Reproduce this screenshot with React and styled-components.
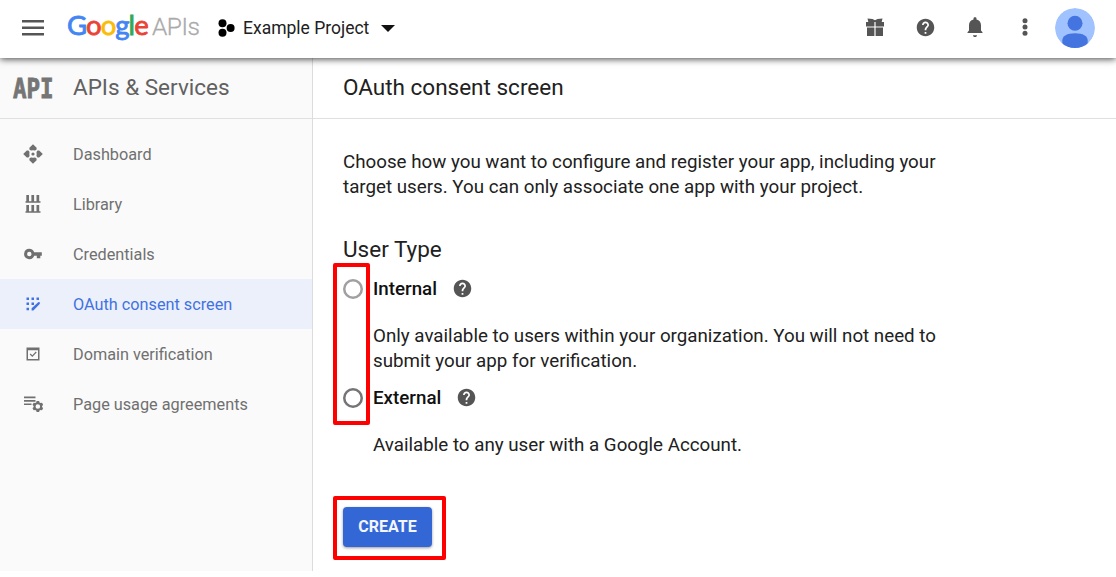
import React from "react";
import styled, { createGlobalStyle } from "styled-components";

const GlobalStyle = createGlobalStyle`
  * { box-sizing: border-box; }
  body { margin: 0; background: #fff; font-family: Roboto, "Liberation Sans", sans-serif; }
  h1, h2, p { margin: 0; font-weight: 400; }
  svg { display: block; }
`;

const Page = styled.div`
  display: flex;
  flex-direction: column;
  height: 577px;
  overflow: hidden;
`;

const TopBar = styled.header`
  display: flex;
  align-items: center;
  height: 58px;
  flex: none;
  padding: 0 16px 0 21px;
  background: #fff;
  box-shadow: 0 1px 7px rgba(0, 0, 0, 0.75);
  position: relative;
  z-index: 1;
`;

const IconButton = styled.button`
  display: grid;
  place-items: center;
  flex: none;
  width: ${(p) => p.$width || 50}px;
  height: 50px;
  margin-top: ${(p) => p.$top || "-4px"};
  padding: 0;
  border: 0;
  background: none;
  color: #555;
`;

const Brand = styled.div`
  display: flex;
  align-items: baseline;
  width: 151px;
  height: 42px;
  margin-left: 22px;
  white-space: nowrap;
`;

const GoogleWord = styled.span`
  font: 400 27.5px/34px Lato, sans-serif;
  letter-spacing: -0.95px;
  width: 85px;
`;

const Letter = styled.span`
  color: ${(p) => p.$color};
  -webkit-text-stroke: 0.8px ${(p) => p.$color};
`;

const ApisWord = styled.span`
  color: #aaa;
  font: 300 24.5px/34px Roboto, sans-serif;
  letter-spacing: -0.5px;
  -webkit-text-stroke: 0.3px #aaa;
`;

const ProjectPicker = styled.button`
  display: flex;
  align-items: center;
  gap: 8px;
  padding: 0;
  border: 0;
  background: none;
  color: #212121;
  font: 400 17.5px/24px Roboto, sans-serif;
  margin-top: -2px;
`;

const ProjectName = styled.span`
  width: 130px;
  text-align: left;
  white-space: nowrap;
`;

const Actions = styled.div`
  display: flex;
  align-items: center;
  margin-left: auto;
`;

const Body = styled.div`
  display: flex;
  height: 513px;
`;

const Sidebar = styled.aside`
  width: 313px;
  flex: none;
  background: #fafafa;
  border-right: 1px solid #dcdcdc;
`;

const SidebarTitle = styled.div`
  display: flex;
  align-items: center;
  height: 61px;
  padding: 0 0 2px 13px;
  border-bottom: 1px solid #e0e0e0;
  color: #616161;
  font-size: 22.5px;
`;

const ApiMark = styled.span`
  width: 60px;
  padding-top: 1px;
  color: #757575;
  font: 700 22.5px/22px "DejaVu Sans Mono", monospace;
  transform: scaleY(1.22);
  -webkit-text-stroke: 0.7px #757575;
`;

const Nav = styled.nav`
  padding-top: 10px;
`;

const NavItem = styled.a`
  display: flex;
  align-items: center;
  height: 50px;
  padding: 0 0 0 23px;
  gap: 30px;
  font-size: 16.25px;
  color: ${(p) => (p.$active ? "#4272e2" : "#707070")};
  background: ${(p) => (p.$active ? "#ebf0fa" : "transparent")};
`;

const Main = styled.main`
  flex: 1;
  color: #212121;
`;

const PageTitle = styled.h1`
  height: 61px;
  padding-left: 30px;
  border-bottom: 1px solid #e0e0e0;
  font-size: 22.5px;
  line-height: 58px;
`;

const Content = styled.div`
  padding: 31px 0 0 30px;
`;

const Copy = styled.p`
  font-size: 18.75px;
  line-height: 25px;
  white-space: nowrap;
`;

const SectionTitle = styled.h2`
  margin-top: 35px;
  font-size: 22.5px;
  line-height: 28px;
`;

const Options = styled.div`
  position: relative;
  padding-top: 11px;
`;

const Option = styled.section`
  margin-bottom: 9px;
`;

const OptionLabel = styled.label`
  display: flex;
  align-items: center;
  height: 30px;
  font-size: 18.75px;
  font-weight: 500;
  color: #111;
`;

const Radio = styled.span`
  width: 20px;
  height: 20px;
  margin-right: 10px;
  border-radius: 50%;
  box-shadow: inset 0 0 0 2.5px ${(p) => (p.$muted ? "#a0a0a0" : "#757575")};
`;

const HelpSlot = styled.span`
  margin: -1px 0 0 15px;
  color: #555;
`;

const OptionCopy = styled(Copy)`
  margin: 20px 0 0 30px;
`;

const Highlight = styled.span`
  position: absolute;
  pointer-events: none;
  inset: ${(p) => p.$inset};
  width: ${(p) => p.$width || "auto"};
  border: 4px solid #f00;
  border-radius: 2px;
`;

const CreateArea = styled.div`
  position: relative;
  width: 89px;
  margin-top: 49px;
`;

const CreateButton = styled.button`
  display: block;
  width: 89px;
  height: 40px;
  padding: 0;
  border: 0;
  border-radius: 4px;
  background: #3367d6;
  color: #f3f6ff;
  font: 700 16px/38px Roboto, sans-serif;
  box-shadow: 0 1px 3px rgba(0, 0, 0, 0.4);
`;

const Icon = ({ size = 20, box = "0 0 24 24", children }) => (
  <svg width={size} height={size} viewBox={box} fill="currentColor">{children}</svg>
);

const HelpIcon = () => (
  <Icon size={21}>
    <path d="M12 2C6.48 2 2 6.48 2 12s4.48 10 10 10 10-4.48 10-10S17.52 2 12 2zm1 17h-2v-2h2v2zm2.07-7.75l-.9.92C13.45 12.9 13 13.5 13 15h-2v-.5c0-1.1.45-2.1 1.17-2.83l1.24-1.26c.37-.36.59-.86.59-1.41 0-1.1-.9-2-2-2s-2 .9-2 2H8c0-2.21 1.79-4 4-4s4 1.79 4 4c0 .88-.36 1.68-.93 2.25z" />
  </Icon>
);

const navIcons = {
  dashboard: (
    <>
      <path d="M10 .2l3.600 3.600v1.700L10 8 6.400 5.500V3.800zM10 19.800l-3.600-3.600v-1.700L10 12l3.600 2.500v1.700zM.2 10l3.600-3.600h1.700L8 10l-2.500 3.600H3.800zM19.800 10l-3.600 3.600h-1.700L12 10l2.500-3.600h1.700z" />
      <circle cx="10" cy="10" r="3.700" fill="#fafafa" />
      <circle cx="10" cy="10" r="1.600" />
    </>
  ),
  library: (
    <path d="M3.300 1h2.700v6.300h2.400V1h2.700v6.300h2.400V1h2.700v6.300h1.300v1.500h-15V7.300h.8zM3.300 11h2.700v6.300h2.400V11h2.700v6.300h2.400V11h2.700v6.300h1.300v1.500h-15v-1.500h.8z" />
  ),
  key: (
    <path fillRule="evenodd" d="M6.300 4.800a5.200 5.200 0 1 0 4.900 7h2.600v2.500h3.500v-2.500h1.500V8.300h-7.600a5.200 5.200 0 0 0-4.900-3.500zm0 3a2.200 2.200 0 1 1 0 4.400 2.200 2.200 0 0 1 0-4.400z" />
  ),
  consent: (
    <>
      <path d="M3.500 3.500H6V6H3.500zM8.500 3.500H11V6H8.500zM13.500 3.500H16V6h-2.500zM3.500 8.500H6V11H3.500zM8.500 8.500H11V11H8.500zM3.500 13.700H6v2.500H3.500z" />
      <path d="M8.600 16.500v-2.200l6.900-6.300 1.600.4-.4 1.600-6.300 6.500z" />
    </>
  ),
  domain: (
    <path fillRule="evenodd" d="M3.500 3.500h13v13h-13zM5 6.200V15h10V6.200zM6.700 10.400l.9-.9 1.700 1.700 3.500-3.600.9.900-4.400 4.500z" />
  ),
  agreements: (
    <>
      <path d="M1 2.600h11.500v1.700H1zM1 6h11.500v1.700H1zM1 9.400h7.500v1.700H1z" />
      <path fillRule="evenodd" d="M13.600 7h2.500l.4 1.500 1 .6 1.500-.4 1.200 2.100-1.100 1.100v1.200l1.100 1.100-1.200 2.100-1.500-.4-1 .6-.4 1.500h-2.500l-.4-1.500-1-.6-1.500.4-1.200-2.100 1.100-1.100v-1.200l-1.100-1.100 1.200-2.100 1.500.4 1-.6zM14.850 10.200a2.300 2.300 0 1 0 0 4.600 2.300 2.300 0 0 0 0-4.600z" />
    </>
  ),
};

const navItems = [
  ["dashboard", "Dashboard"],
  ["library", "Library"],
  ["key", "Credentials"],
  ["consent", "OAuth consent screen"],
  ["domain", "Domain verification"],
  ["agreements", "Page usage agreements"],
];

const brandLetters = [
  ["G", "#4285f4"], ["o", "#ea4335"], ["o", "#fbbc05"],
  ["g", "#4285f4"], ["l", "#34a853"], ["e", "#ea4335"],
];

export default function App() {
  return (
    <Page>
      <GlobalStyle />
      <TopBar>
        <IconButton $width={24} $top="-3px" aria-label="Menu">
          <svg width="24" height="16" fill="currentColor">
            <path d="M1 0h22v2.400H1zM1 6.500h22v2.400H1zM1 13h22v2.400H1z" />
          </svg>
        </IconButton>
        <Brand>
          <GoogleWord>
            {brandLetters.map(([letter, color], i) => (
              <Letter key={i} $color={color}>{letter}</Letter>
            ))}
          </GoogleWord>
          <ApisWord>APIs</ApisWord>
        </Brand>
        <ProjectPicker>
          <svg width="17" height="18">
            <circle cx="4.500" cy="4.200" r="4" /><circle cx="4.500" cy="13.800" r="4" /><circle cx="12.600" cy="9" r="4" />
          </svg>
          <ProjectName>Example Project</ProjectName>
          <svg width="14" height="7"><path d="M0 0h14L7 7z" fill="#111" /></svg>
        </ProjectPicker>
        <Actions>
          <IconButton aria-label="Gifts">
            <svg width="18" height="18" fill="currentColor">
              <path d="M1.500.5l5 .5L9 2.200 11.500 1l5-.5-.8 3.500H18v4.500H9.600V4H8.400v4.500H0V4h2.300zM1 9.600h7.400V18H1zM9.600 9.600H17V18H9.600z" />
            </svg>
          </IconButton>
          <IconButton aria-label="Help"><HelpIcon /></IconButton>
          <IconButton aria-label="Notifications">
            <svg width="16" height="20" fill="currentColor">
              <path d="M8 20c1.300 0 2-.8 2-1.800H6C6 19.200 6.700 20 8 20zM14 13.500V8.300c0-3-1.600-5.200-4.500-5.900v-.7C9.500.8 8.900.3 8 .3S6.500.8 6.500 1.700v.7C3.600 3.100 2 5.300 2 8.300v5.200L.5 15.200V16h15v-.8z" />
            </svg>
          </IconButton>
          <IconButton aria-label="More">
            <svg width="6" height="18" fill="currentColor">
              <circle cx="3" cy="2.700" r="2.500" /><circle cx="3" cy="9" r="2.500" /><circle cx="3" cy="15.300" r="2.500" />
            </svg>
          </IconButton>
          <IconButton aria-label="Account" $top="-2px">
            <svg width="40" height="40" viewBox="0 0 40 40">
              <defs><clipPath id="avatar"><circle cx="20" cy="20" r="20" /></clipPath></defs>
              <g clipPath="url(#avatar)">
                <circle cx="20" cy="20" r="20" fill="#a0c2ff" />
                <circle cx="20" cy="15.300" r="7.500" fill="#4374e0" />
                <path d="M7.300 40v-7.500C7.300 28 12 25.200 20 25.200s12.700 2.800 12.700 7.300V40z" fill="#4374e0" />
              </g>
            </svg>
          </IconButton>
        </Actions>
      </TopBar>
      <Body>
        <Sidebar>
          <SidebarTitle><ApiMark>API</ApiMark>APIs &amp; Services</SidebarTitle>
          <Nav>
            {navItems.map(([icon, label]) => (
              <NavItem key={icon} $active={icon === "consent"}>
                <Icon box="0 0 20 20">{navIcons[icon]}</Icon>
                <span>{label}</span>
              </NavItem>
            ))}
          </Nav>
        </Sidebar>
        <Main>
          <PageTitle>OAuth consent screen</PageTitle>
          <Content>
            <Copy>
              Choose how you want to configure and register your app, including your<br />
              target users. You can only associate one app with your project.
            </Copy>
            <SectionTitle>User Type</SectionTitle>
            <Options>
              <Option>
                <OptionLabel><Radio $muted />Internal<HelpSlot><HelpIcon /></HelpSlot></OptionLabel>
                <OptionCopy>
                  Only available to users within your organization. You will not need to<br />
                  submit your app for verification.
                </OptionCopy>
              </Option>
              <Option>
                <OptionLabel><Radio />External<HelpSlot><HelpIcon /></HelpSlot></OptionLabel>
                <OptionCopy>Available to any user with a Google Account.</OptionCopy>
              </Option>
              <Highlight $inset="0 auto 33px -10px" $width="37px" />
            </Options>
            <CreateArea>
              <CreateButton>CREATE</CreateButton>
              <Highlight $inset="-11px -14px -13px -10px" />
            </CreateArea>
          </Content>
        </Main>
      </Body>
    </Page>
  );
}
